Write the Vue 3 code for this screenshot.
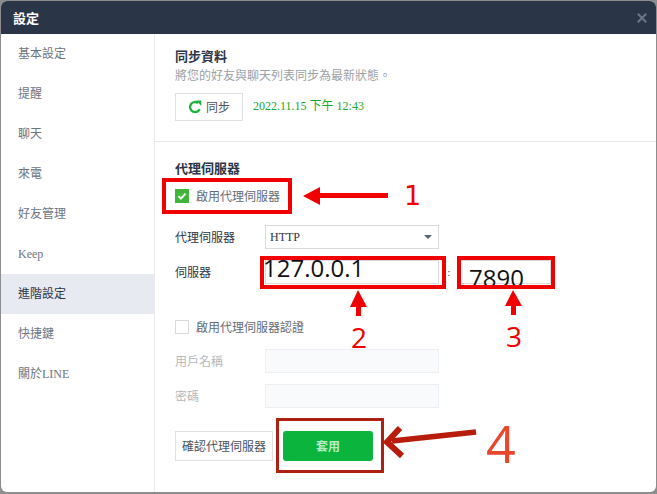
<template>
  <div class="page">
    <div class="window">
      <div class="title-bar">
        <span class="title">設定</span>
        <svg class="close" width="10" height="10" viewBox="0 0 10 10">
          <path d="M.8.8l8.4 8.4M9.2.8L.8 9.2" stroke="#6d7686" stroke-width="2" fill="none" />
        </svg>
      </div>
      <div class="body">
        <div class="sidebar">
          <div
            v-for="item in menu"
            :key="item"
            class="menu-item"
            :class="{ active: item === '進階設定' }"
          >{{ item }}</div>
        </div>
        <div class="content">
          <section class="sync">
            <h3 class="heading">同步資料</h3>
            <p class="desc">將您的好友與聊天列表同步為最新狀態。</p>
            <div class="sync-row">
              <button class="sync-btn">
                <svg width="14" height="14" viewBox="0 0 14 14">
                  <path d="M11.6 9.2A5 5 0 1 1 10 3" stroke="#1fb141" stroke-width="2.4" fill="none" />
                  <path d="M8 .6h5.4v5.4z" fill="#1fb141" />
                </svg>
                同步
              </button>
              <span class="sync-time">2022.11.15 下午 12:43</span>
            </div>
          </section>
          <section class="proxy">
            <h3 class="heading">代理伺服器</h3>
            <label class="check-row first">
              <span class="box checked">
                <svg width="10" height="10" viewBox="0 0 10 10">
                  <path d="M1.5 5.2l2.4 2.4 4.6-5" stroke="#fff" stroke-width="2" fill="none" />
                </svg>
              </span>
              啟用代理伺服器
            </label>
            <div class="field select-row">
              <span class="label">代理伺服器</span>
              <div class="select">
                <span>HTTP</span>
                <i class="caret"></i>
              </div>
            </div>
            <div class="field server-row">
              <span class="label">伺服器</span>
              <div class="input server"><span class="typed host">127.0.0.1</span></div>
              <span class="colon">:</span>
              <div class="input port"><span class="typed port-text">7890</span></div>
            </div>
            <label class="check-row second">
              <span class="box"></span>
              啟用代理伺服器認證
            </label>
            <div class="field off user-row">
              <span class="label">用戶名稱</span>
              <div class="input disabled"></div>
            </div>
            <div class="field off pass-row">
              <span class="label">密碼</span>
              <div class="input disabled"></div>
            </div>
            <div class="actions">
              <button class="verify-btn">確認代理伺服器</button>
              <button class="apply-btn">套用</button>
            </div>
          </section>
        </div>
      </div>

      <!-- 教學標註 -->
      <div class="mark red box-1"></div>
      <div class="mark red box-2"></div>
      <div class="mark red box-3"></div>
      <div class="mark dark box-4"></div>
      <svg class="arrows" width="657" height="494" viewBox="0 0 657 494">
        <path d="M303 196l17-9v6h68v5h-68v7z" fill="#f00000" />
        <path d="M358 290l9 17h-6v9h-5v-9h-6z" fill="#f00000" />
        <path d="M513 290l9 16h-6v9h-5v-9h-6z" fill="#f00000" />
        <path d="M476 432l-84 9" stroke="#b71c0c" stroke-width="5.5" fill="none" />
        <path d="M400 428l-13 14 15 14" stroke="#b71c0c" stroke-width="6" fill="none" />
      </svg>
      <span class="num n1">1</span>
      <span class="num n2">2</span>
      <span class="num n3">3</span>
      <span class="num n4">4</span>
    </div>
  </div>
</template>

<script setup>
const menu = ['基本設定', '提醒', '聊天', '來電', '好友管理', 'Keep', '進階設定', '快捷鍵', '關於LINE']
</script>

<style>
html,
body {
  margin: 0;
  background: #8d8d8d;
}
</style>

<style scoped>
.page {
  width: 657px;
  height: 494px;
  padding: 1px 1px 2px 1px;
  box-sizing: border-box;
  overflow: hidden;
  font-family: "Liberation Serif", "Noto Sans CJK TC", serif;
  font-size: 12px;
  color: #2b3548;
}

.window {
  position: relative;
  height: 100%;
  background: #fff;
  border-radius: 6px;
  overflow: hidden;
  display: flex;
  flex-direction: column;
}

.title-bar {
  height: 33px;
  flex: none;
  background: #2b3548;
  display: flex;
  align-items: center;
  justify-content: space-between;
  padding: 0 9px 0 12px;
}

.title {
  color: #fff;
  font-size: 13px;
  font-weight: 700;
}

.body {
  flex: 1;
  display: flex;
  min-height: 0;
}

.sidebar {
  width: 153px;
  flex: none;
  border-right: 1px solid #e8eaee;
}

.menu-item {
  height: 40px;
  line-height: 40px;
  padding-left: 17px;
  color: #6d7480;
}

.menu-item.active {
  background: #e7eaf1;
  color: #2b3548;
}

.content {
  flex: 1;
  min-width: 0;
}

.sync {
  height: 108px;
  box-sizing: border-box;
  border-bottom: 1px solid #e6e8ec;
  padding: 15px 0 0 20px;
}

.heading {
  margin: 0;
  font-size: 13px;
  line-height: 16px;
  font-weight: 700;
  color: #2b3548;
}

.desc {
  margin: 3px 0 0;
  line-height: 16px;
  color: #9b9fa6;
}

.sync-row {
  display: flex;
  align-items: center;
  margin-top: 9px;
  gap: 10px;
}

.sync-btn {
  width: 68px;
  height: 28px;
  padding: 0;
  display: flex;
  align-items: center;
  justify-content: center;
  gap: 4px;
  background: #fff;
  border: 1px solid #dfe1e5;
  font: inherit;
  color: #4a5261;
}

.sync-time {
  color: #19a82f;
  margin-top: -5px;
}

.proxy {
  padding: 19px 0 0 20px;
}

.check-row {
  display: flex;
  align-items: center;
  gap: 7px;
  height: 16px;
  color: #646b78;
}

.check-row.first {
  margin-top: 11px;
}

.check-row.second {
  margin-top: 35px;
  color: #646b78;
}

.box {
  width: 14px;
  height: 14px;
  box-sizing: border-box;
  border: 1px solid #d8dade;
  display: flex;
  align-items: center;
  justify-content: center;
}

.box.checked {
  background: #3fb83a;
  border-color: #3fb83a;
}

.field {
  display: flex;
  align-items: center;
}

.label {
  width: 90px;
  flex: none;
}

.select-row {
  margin-top: 21px;
}

.select {
  width: 174px;
  height: 24px;
  box-sizing: border-box;
  border: 1px solid #d8dade;
  display: flex;
  align-items: center;
  justify-content: space-between;
  padding: 0 6px 0 4px;
  font-size: 12px;
  color: #2b3548;
}

.caret {
  width: 0;
  height: 0;
  border-left: 4px solid transparent;
  border-right: 4px solid transparent;
  border-top: 4px solid #596274;
}

.server-row {
  margin-top: 11px;
}

.input {
  height: 24px;
  box-sizing: border-box;
  border: 1px solid #d8dade;
  position: relative;
}

.server {
  width: 174px;
}

.colon {
  width: 20px;
  text-align: center;
  font-size: 10px;
}

.port {
  width: 92px;
}

.typed {
  position: absolute;
  font-family: "Open Sans", "Liberation Sans", sans-serif;
  color: #111;
  line-height: 1;
}

.host {
  left: -3px;
  top: -5px;
  font-size: 24px;
}

.port-text {
  left: 9px;
  top: 5px;
  font-size: 24px;
}

.off .label {
  color: #b5b8bd;
}

.disabled {
  width: 174px;
  background: #f9fafb;
  border-color: #eeeff2;
}

.user-row {
  margin-top: 14px;
}

.pass-row {
  margin-top: 11px;
}

.actions {
  display: flex;
  gap: 10px;
  margin-top: 23px;
}

.verify-btn {
  width: 98px;
  height: 30px;
  padding: 0;
  background: #fff;
  border: 1px solid #dfe1e5;
  font: inherit;
  color: #4a5261;
}

.apply-btn {
  width: 90px;
  height: 30px;
  padding: 0;
  background: #0bb53d;
  border: none;
  border-radius: 3px;
  font: inherit;
  font-weight: 700;
  color: #b5ecc4;
}

.mark {
  position: absolute;
  box-sizing: border-box;
}

.red {
  border: 4px solid #f00000;
}

.dark {
  border: 3px solid #ad2012;
}

.box-1 {
  left: 161px;
  top: 177px;
  width: 130px;
  height: 36px;
}

.box-2 {
  left: 259px;
  top: 255px;
  width: 186px;
  height: 33px;
}

.box-3 {
  left: 456px;
  top: 255px;
  width: 98px;
  height: 33px;
}

.box-4 {
  left: 275px;
  top: 417px;
  width: 108px;
  height: 55px;
}

.arrows {
  position: absolute;
  left: -1px;
  top: -1px;
  pointer-events: none;
}

.num {
  position: absolute;
  font-family: "Open Sans", "Liberation Sans", sans-serif;
  color: #f00000;
  font-size: 28px;
  line-height: 1;
}

.n1 {
  font-family: "DejaVu Sans", sans-serif;
  font-size: 27px;
  left: 403px;
  top: 181px;
}

.n2 {
  left: 350px;
  top: 322px;
}

.n3 {
  left: 505px;
  top: 321px;
}

.n4 {
  left: 485px;
  top: 416px;
  font-size: 52px;
  color: #e8472e;
}
</style>
